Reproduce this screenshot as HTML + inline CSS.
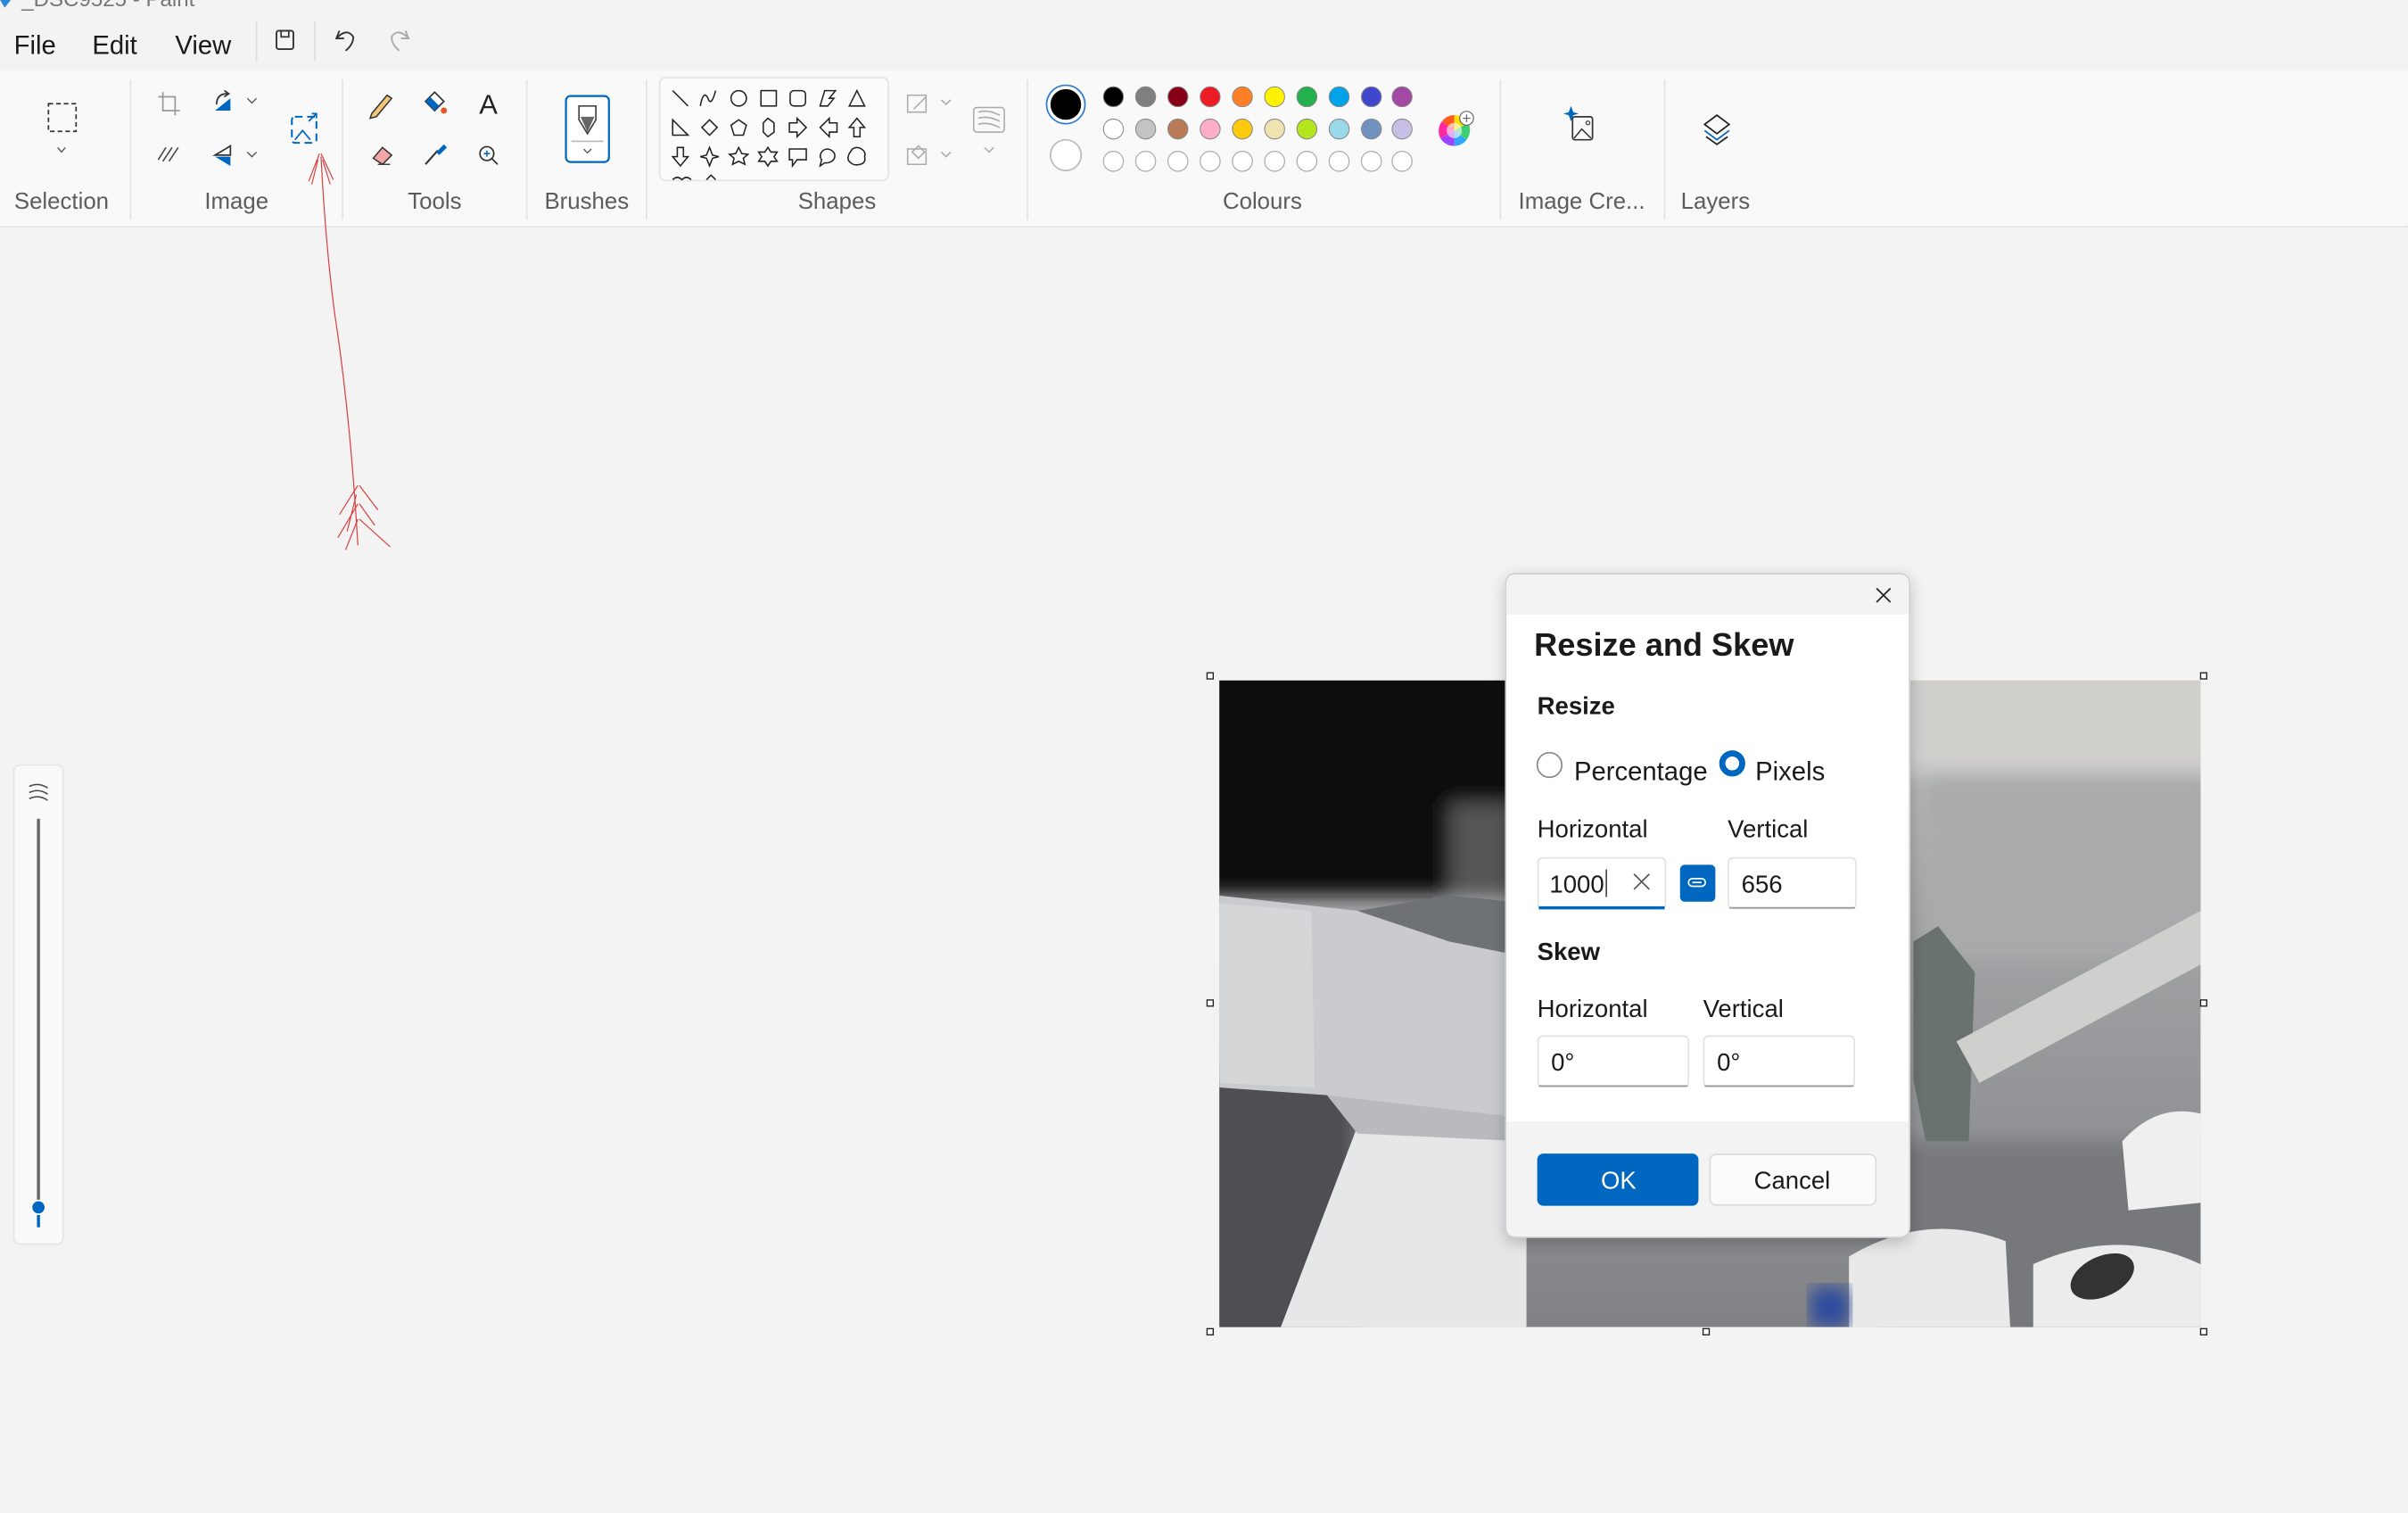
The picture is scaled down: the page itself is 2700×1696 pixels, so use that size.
<!DOCTYPE html>
<html><head><meta charset="utf-8"><style>
html,body{margin:0;padding:0;background:#f3f3f3;overflow:hidden}
svg{display:block}
text{font-family:"Liberation Sans",sans-serif}
</style></head><body>
<svg width="2700" height="1696" viewBox="0 0 1568 985" xmlns="http://www.w3.org/2000/svg">
<defs>
<linearGradient id="bg1" x1="0" y1="0" x2="0" y2="1"><stop offset="0" stop-color="#c4c4c4"/><stop offset="0.4" stop-color="#a0a2a4"/><stop offset="1" stop-color="#808285"/></linearGradient>
<filter id="sh" x="-10%" y="-10%" width="120%" height="120%"><feDropShadow dx="0" dy="3" stdDeviation="5" flood-opacity="0.22"/></filter>
<filter id="bl"><feGaussianBlur stdDeviation="6"/></filter>
</defs>
<rect width="1568" height="985" fill="#f3f3f3"/>
<path d="M0 0 L7 0 L3 5 Z" fill="#2b88d8"/>
<text x="14" y="4" font-size="14" fill="#777">_DSC9525 - Paint</text>
<text x="9" y="35" font-size="17" fill="#1a1a1a">File</text>
<text x="60" y="35" font-size="17" fill="#1a1a1a">Edit</text>
<text x="114" y="35" font-size="17" fill="#1a1a1a">View</text>
<line x1="167" y1="14" x2="167" y2="40" stroke="#ddd"/>
<line x1="205" y1="14" x2="205" y2="40" stroke="#ddd"/>
<rect x="180" y="20" width="11" height="12" rx="1.5" fill="none" stroke="#333" stroke-width="1.1"/>
<rect x="183" y="20" width="5" height="4" fill="none" stroke="#333" stroke-width="1"/>
<path d="M221 20 L219 25 L224 25 M219.5 24.5 Q226 18 230 24 Q230 29 225 33" fill="none" stroke="#333" stroke-width="1.1"/>
<path d="M264 20 L266 25 L261 25 M265.5 24.5 Q259 18 255 24 Q255 29 260 33" fill="none" stroke="#aaa" stroke-width="1.1"/>
<rect x="0" y="46" width="1568" height="101" fill="#f9f9f9"/>
<line x1="0" y1="147.5" x2="1568" y2="147.5" stroke="#e6e6e6"/>
<g stroke="#e3e3e3">
<line x1="85" y1="52" x2="85" y2="143"/><line x1="223" y1="52" x2="223" y2="143"/><line x1="343" y1="52" x2="343" y2="143"/><line x1="421" y1="52" x2="421" y2="143"/><line x1="669" y1="52" x2="669" y2="143"/><line x1="977" y1="52" x2="977" y2="143"/><line x1="1084" y1="52" x2="1084" y2="143"/>
</g>
<g font-size="15" fill="#5c5c5c" text-anchor="middle">
<text x="40" y="136">Selection</text><text x="154" y="136">Image</text><text x="283" y="136">Tools</text><text x="382" y="136">Brushes</text><text x="545" y="136">Shapes</text><text x="822" y="136">Colours</text><text x="1030" y="136">Image Cre...</text><text x="1117" y="136">Layers</text>
</g>
<rect x="31.5" y="67.5" width="18" height="18" fill="none" stroke="#333" stroke-dasharray="3 2"/>
<path d="M37.5 96 L40 99 L42.5 96" fill="none" stroke="#555" stroke-width="0.8"/>
<path d="M106 60 V72 H117 M103 63 H114 V75" fill="none" stroke="#999" stroke-width="1"/>
<path d="M140 72 L150 64 V72 Z" fill="#0067c0"/><path d="M141 68 Q141 61 148 61 M146 59 L149 61 L146 63" fill="none" stroke="#333" stroke-width="1"/>
<path d="M161 64 L164 67 L167 64" fill="none" stroke="#555" stroke-width="0.8"/>
<g stroke="#444" stroke-width="0.9"><line x1="103" y1="104" x2="108" y2="96"/><line x1="106" y1="105" x2="112" y2="96"/><line x1="110" y1="105" x2="116" y2="96"/></g>
<path d="M140 101 L150 95 V101 Z" fill="none" stroke="#333"/><path d="M140 102 L150 102 V108 Z" fill="#0067c0"/>
<path d="M161 99 L164 102 L167 99" fill="none" stroke="#555" stroke-width="0.8"/>
<rect x="190" y="76" width="16" height="17" rx="2" fill="none" stroke="#0067c0" stroke-width="1.2" stroke-dasharray="5 3"/>
<path d="M192 91 L197 85 L202 91" fill="none" stroke="#0067c0"/><path d="M201 79 L206 74 M203 74 H206 V77" fill="none" stroke="#0067c0"/>
<path d="M242 74 L252 62 L255 64 L245 76 L241 77 Z" fill="#f3c77a" stroke="#333" stroke-width="0.9"/>
<path d="M277 66 L283 60 L289 66 L283 72 Z" fill="#fff" stroke="#333"/><path d="M277 66 L283 72 L286 69 L280 63Z" fill="#0067c0"/><circle cx="289" cy="72" r="2" fill="#e8571e"/>
<text x="318" y="74" font-size="18" text-anchor="middle" fill="#222" font-family="Liberation Serif">A</text>
<path d="M243 103 L249 96 L255 101 L249 107 Z" fill="#f4a6a6" stroke="#333" stroke-width="0.9"/><line x1="246" y1="107" x2="254" y2="107" stroke="#333" stroke-width="0.8"/>
<path d="M277 107 L285 98" stroke="#333" stroke-width="1.2"/><path d="M284 99 L289 94 L291 96 L286 101 Z" fill="#0067c0"/>
<circle cx="317" cy="100" r="4.5" fill="none" stroke="#333"/><line x1="320" y1="103" x2="324" y2="107" stroke="#333"/><path d="M315 100 H319 M317 98 V102" stroke="#0067c0" stroke-width="0.9"/>
<rect x="368.5" y="62.5" width="28" height="43" rx="3" fill="#fff" stroke="#0067c0" stroke-width="1.3"/>
<path d="M377 69 H388 V78 L382.5 87 L377 78 Z" fill="#fff" stroke="#444"/><path d="M378 76 H387 L382.5 86 Z" fill="#666"/>
<line x1="372" y1="92" x2="393" y2="92" stroke="#bbb"/>
<path d="M380 97 L382.5 99.5 L385 97" fill="none" stroke="#555" stroke-width="0.8"/>
<rect x="429.5" y="50.5" width="149" height="67" rx="4" fill="#fbfbfb" stroke="#e4e4e4"/>
<g fill="none" stroke="#222" stroke-width="0.9">
<line x1="438" y1="59" x2="448" y2="69"/>
<path d="M456 69 Q458 58 461 64 Q463 70 466 59"/>
<circle cx="481" cy="64" r="5"/>
<rect x="495.5" y="59" width="10" height="10"/>
<rect x="514.5" y="59" width="10" height="10" rx="2.5"/>
<path d="M534 69 L537 59 H544 L540 64 H543 L539 69 Z"/>
<path d="M553 69 L558 59 L563 69 Z"/>
<path d="M438 78 V88 H448 Z"/>
<path d="M462 78 L467 83 L462 88 L457 83 Z"/>
<path d="M481 78 L486 81.5 L484 88 H478 L476 81.5 Z"/>
<path d="M497 80 L500 77 L504 80 V86 L500 89 L497 86 Z"/>
<path d="M514 80 H519 V77 L525 83 L519 89 V86 H514 Z"/>
<path d="M545 80 H540 V77 L534 83 L540 89 V86 H545 Z"/>
<path d="M556 89 V83 H553 L558 77 L563 83 H560 V89 Z"/>
<path d="M441 96 V102 H438 L443 108 L448 102 H445 V96 Z"/>
<path d="M462 96 L464 101 L468 102 L464 103 L462 108 L460 103 L456 102 L460 101 Z"/>
<path d="M481 96 L483 100 L487 100.5 L484 103 L485 107 L481 105 L477 107 L478 103 L475 100.5 L479 100 Z"/>
<path d="M500 96 L502 99 L506 99 L504 102 L506 105 L502 105 L500 108 L498 105 L494 105 L496 102 L494 99 L498 99 Z"/>
<path d="M514 97 H525 V104 H519 L516 108 V104 H514 Z"/>
<path d="M539 97 A5.5 4.5 0 1 1 537 106 L534 108 L535 104 A5 4.5 0 0 1 539 97 Z"/>
<path d="M555 97 Q558 95 561 97 Q564 99 563 102 Q564 106 560 107 Q556 108 554 106 Q551 104 553 100 Z"/>
<path d="M438 117 Q441 114 444 117 Q447 114 450 117"/><path d="M460 117 L463 114 L466 117"/>
</g>
<g fill="none" stroke="#aaa" stroke-width="0.9">
<path d="M591 62 H603 V73 H591 Z"/><path d="M595 71 L603 63"/>
<path d="M613 65 L616 68 L619 65"/>
<path d="M591 97 H603 V107 H591 Z"/><path d="M594 99 L598 95 L602 99 L598 103 Z"/>
<path d="M613 99 L616 102 L619 99"/>
<rect x="634" y="70" width="20" height="16" rx="2"/><path d="M637 73 Q643 71 651 75 M637 77 Q643 75 651 79 M637 81 Q643 79 651 83"/>
<path d="M641 96 L644 99 L647 96"/>
</g>
<circle cx="694" cy="68" r="12.5" fill="#fff" stroke="#2b7cd3" stroke-width="1"/>
<circle cx="694" cy="68" r="10" fill="#000"/>
<circle cx="694" cy="101" r="10" fill="#fff" stroke="#bbb"/>
<g stroke-width="0.6" stroke="#888">
<circle cx="725" cy="63" r="6.5" fill="#000"/><circle cx="746" cy="63" r="6.5" fill="#7f7f7f"/><circle cx="767" cy="63" r="6.5" fill="#880015"/><circle cx="788" cy="63" r="6.5" fill="#ed1c24"/><circle cx="809" cy="63" r="6.5" fill="#ff7f27"/><circle cx="830" cy="63" r="6.5" fill="#fff200"/><circle cx="851" cy="63" r="6.5" fill="#22b14c"/><circle cx="872" cy="63" r="6.5" fill="#00a2e8"/><circle cx="893" cy="63" r="6.5" fill="#3f48cc"/><circle cx="913" cy="63" r="6.5" fill="#a349a4"/>
<circle cx="725" cy="84" r="6.5" fill="#fff"/><circle cx="746" cy="84" r="6.5" fill="#c3c3c3"/><circle cx="767" cy="84" r="6.5" fill="#b97a57"/><circle cx="788" cy="84" r="6.5" fill="#ffaec9"/><circle cx="809" cy="84" r="6.5" fill="#ffc90e"/><circle cx="830" cy="84" r="6.5" fill="#efe4b0"/><circle cx="851" cy="84" r="6.5" fill="#b5e61d"/><circle cx="872" cy="84" r="6.5" fill="#99d9ea"/><circle cx="893" cy="84" r="6.5" fill="#7092be"/><circle cx="913" cy="84" r="6.5" fill="#c8bfe7"/>
</g>
<g fill="#fff" stroke="#aaa" stroke-width="0.7">
<circle cx="725" cy="105" r="6.5"/><circle cx="746" cy="105" r="6.5"/><circle cx="767" cy="105" r="6.5"/><circle cx="788" cy="105" r="6.5"/><circle cx="809" cy="105" r="6.5"/><circle cx="830" cy="105" r="6.5"/><circle cx="851" cy="105" r="6.5"/><circle cx="872" cy="105" r="6.5"/><circle cx="893" cy="105" r="6.5"/><circle cx="913" cy="105" r="6.5"/>
</g>
<path d="M947 85 L947 75 A10 10 0 0 1 956 80 Z" fill="#ffde00"/><path d="M947 85 L956 80 A10 10 0 0 1 955 91 Z" fill="#3cd070"/><path d="M947 85 L955 91 A10 10 0 0 1 947 95 Z" fill="#2ea8ff"/><path d="M947 85 L947 95 A10 10 0 0 1 938 90 Z" fill="#a040ff"/><path d="M947 85 L938 90 A10 10 0 0 1 939 79 Z" fill="#ff2aa0"/><path d="M947 85 L939 79 A10 10 0 0 1 947 75 Z" fill="#ff5a1e"/>
<circle cx="947" cy="85" r="5" fill="#fff" opacity="0.6"/>
<circle cx="955" cy="77" r="4.5" fill="#fff" stroke="#666" stroke-width="0.7"/><path d="M952.5 77 H957.5 M955 74.5 V79.5" stroke="#666" stroke-width="0.7"/>
<rect x="1024" y="76" width="13" height="15" rx="1.5" fill="none" stroke="#333" stroke-width="1"/>
<path d="M1025 90 L1030 84 L1036 90" fill="none" stroke="#333" stroke-width="0.9"/><circle cx="1034" cy="80" r="1.2" fill="none" stroke="#333" stroke-width="0.7"/>
<path d="M1023 69 L1024.5 73 L1028 74 L1024.5 75 L1023 79 L1021.5 75 L1018 74 L1021.5 73 Z" fill="#0067c0"/>
<path d="M1110 81 L1118 75 L1126 81 L1118 87 Z" fill="none" stroke="#222" stroke-width="1"/>
<path d="M1110 85 L1118 91 L1126 85" fill="none" stroke="#0067c0" stroke-width="1"/><path d="M1111 89 L1118 94 L1125 89" fill="none" stroke="#222" stroke-width="1"/>
<g fill="none" stroke="#d84040" stroke-width="0.7">
<path d="M209 102 Q212 160 218 205 Q228 270 233 355"/>
<path d="M208 100 L201 118 M209 100 L217 117 M207 104 L203 120 M210 104 L215 120"/>
<path d="M233 316 L221 335 M233 328 L220 350 M233 338 L225 358 M234 316 L246 332 M234 328 L244 342 M234 338 L254 356 M232 322 L226 346"/>
</g>
<rect x="9" y="498" width="32" height="312" rx="4" fill="#f9f9f9" stroke="#e5e5e5"/>
<path d="M19 512 Q25 509 31 513 M19 516 Q25 513 31 517 M19 520 Q25 517 31 521" fill="none" stroke="#444" stroke-width="0.9"/>
<line x1="25" y1="533" x2="25" y2="783" stroke="#666" stroke-width="2"/>
<line x1="25" y1="786" x2="25" y2="799" stroke="#0067c0" stroke-width="2"/>
<circle cx="25" cy="786" r="4.5" fill="#0067c0" stroke="#fff" stroke-width="1"/>
<svg x="794" y="443" width="639" height="421" viewBox="0 0 639 421">
<rect width="639" height="421" fill="url(#bg1)"/>
<g filter="url(#bl)">
<rect x="-20" y="-20" width="220" height="160" fill="#0c0c0c"/>
<rect x="150" y="80" width="60" height="60" fill="#555"/>
<rect x="-20" y="250" width="110" height="190" fill="#505052"/>
<rect x="440" y="-20" width="220" height="80" fill="#d0cfcc"/>
<rect x="460" y="60" width="190" height="120" fill="#a9aaac"/>
<rect x="430" y="300" width="220" height="140" fill="#76787c"/>
</g>
<path d="M0 140 L90 150 L150 170 L200 180 L200 285 L120 282 L70 270 L0 265 Z" fill="#c9cbce"/>
<path d="M0 145 L60 150 L62 265 L0 262 Z" fill="#d5d6d8"/>
<path d="M90 150 L150 140 L200 145 L200 180 L150 170 Z" fill="#6e7277"/>
<path d="M40 421 L90 290 L200 282 L200 421 Z" fill="#e6e7e9"/>
<path d="M70 270 L200 285 L200 300 L90 295 Z" fill="#b8babd"/>
<path d="M452 170 L468 160 L492 190 L488 300 L460 300 L452 260 Z" fill="#6a7270"/>
<path d="M480 235 L639 150 L639 185 L495 262 Z" fill="#cfcfcd"/>
<path d="M588 300 Q610 275 639 282 L639 340 L592 345 Z" fill="#efefef"/>
<path d="M410 375 Q460 345 512 365 L515 421 L410 421 Z" fill="#e9e9e9"/>
<path d="M530 380 Q585 355 639 380 L639 421 L530 421 Z" fill="#ececec"/>
<ellipse cx="575" cy="388" rx="22" ry="13" fill="#333" transform="rotate(-25 575 388)"/>
<rect x="385" y="395" width="25" height="26" fill="#2a4a9f" filter="url(#bl)"/>
</svg>
<g fill="#fff" stroke="#222" stroke-width="0.8">
<rect x="786" y="438" width="4" height="4"/><rect x="1433" y="438" width="4" height="4"/><rect x="786" y="651" width="4" height="4"/><rect x="1433" y="651" width="4" height="4"/><rect x="786" y="865" width="4" height="4"/><rect x="1109" y="865" width="4" height="4"/><rect x="1433" y="865" width="4" height="4"/>
</g>
<g filter="url(#sh)"><rect x="980.5" y="373.5" width="263" height="432" rx="6" fill="#fff" stroke="#cfcfcf"/></g>
<path d="M981 400 V380 Q981 374 987 374 H1237 Q1243 374 1243 380 V400 Z" fill="#f3f3f3"/>
<path d="M981 730 H1243 V799 Q1243 805 1237 805 H987 Q981 805 981 799 Z" fill="#f3f3f3"/>
<path d="M1222 383 L1231 392 M1231 383 L1222 392" stroke="#222" stroke-width="1"/>
<text x="999" y="427" font-size="21" font-weight="bold" fill="#1a1a1a">Resize and Skew</text>
<text x="1001" y="465" font-size="16" font-weight="bold" fill="#1a1a1a">Resize</text>
<circle cx="1009" cy="498" r="8" fill="#fff" stroke="#8a8a8a"/>
<text x="1025" y="508" font-size="17" fill="#1a1a1a">Percentage</text>
<circle cx="1128" cy="497" r="6.5" fill="#fff" stroke="#0067c0" stroke-width="4"/>
<text x="1143" y="508" font-size="17" fill="#1a1a1a">Pixels</text>
<text x="1001" y="545" font-size="16" fill="#1a1a1a">Horizontal</text>
<text x="1125" y="545" font-size="16" fill="#1a1a1a">Vertical</text>
<rect x="1001.5" y="558.5" width="83" height="33" rx="3" fill="#fff" stroke="#e2e2e2"/>
<line x1="1002" y1="591" x2="1084" y2="591" stroke="#0067c0" stroke-width="2"/>
<text x="1009" y="581" font-size="16" fill="#1a1a1a">1000</text>
<line x1="1046" y1="566" x2="1046" y2="584" stroke="#222" stroke-width="0.8"/>
<path d="M1064 569 L1074 579 M1074 569 L1064 579" stroke="#555" stroke-width="1"/>
<rect x="1094" y="563" width="23" height="24" rx="3" fill="#0067c0"/>
<rect x="1099.5" y="572" width="11" height="5" rx="2.5" fill="none" stroke="#fff" stroke-width="1"/><line x1="1102" y1="574.5" x2="1108" y2="574.5" stroke="#fff"/>
<rect x="1125.5" y="558.5" width="83" height="33" rx="3" fill="#fff" stroke="#e2e2e2"/>
<line x1="1126" y1="591" x2="1208" y2="591" stroke="#999" stroke-width="1"/>
<text x="1134" y="581" font-size="16" fill="#1a1a1a">656</text>
<text x="1001" y="625" font-size="16" font-weight="bold" fill="#1a1a1a">Skew</text>
<text x="1001" y="662" font-size="16" fill="#1a1a1a">Horizontal</text>
<text x="1109" y="662" font-size="16" fill="#1a1a1a">Vertical</text>
<rect x="1001.5" y="674.5" width="98" height="33" rx="3" fill="#fff" stroke="#e2e2e2"/>
<line x1="1002" y1="707" x2="1099" y2="707" stroke="#999"/>
<rect x="1109.5" y="674.5" width="98" height="33" rx="3" fill="#fff" stroke="#e2e2e2"/>
<line x1="1110" y1="707" x2="1207" y2="707" stroke="#999"/>
<text x="1010" y="697" font-size="16" fill="#1a1a1a">0°</text>
<text x="1118" y="697" font-size="16" fill="#1a1a1a">0°</text>
<rect x="1001" y="751" width="105" height="34" rx="4" fill="#0067c0"/>
<text x="1054" y="774" font-size="16" fill="#fff" text-anchor="middle">OK</text>
<rect x="1113.5" y="751.5" width="108" height="33" rx="4" fill="#fbfbfb" stroke="#dcdcdc"/>
<text x="1167" y="774" font-size="16" fill="#1a1a1a" text-anchor="middle">Cancel</text>
</svg>
</body></html>
